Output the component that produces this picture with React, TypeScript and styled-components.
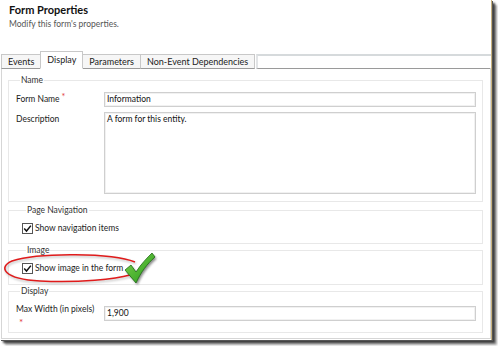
import React from "react";
import styled, { createGlobalStyle } from "styled-components";

const GlobalStyle = createGlobalStyle`
  html, body {
    margin: 0;
    padding: 0;
    background: #ffffff;
  }
  body {
    font-family: Lato, "Noto Sans", "Liberation Sans", sans-serif;
    color: #222;
  }
`;

const Stage = styled.div`
  position: relative;
  width: 498px;
  height: 346px;
  overflow: hidden;
`;

const Frame = styled.div`
  width: 492px;
  height: 340px;
  background: #fff;
  border-right: 1px solid #c9b27c;
  box-sizing: border-box;
  box-shadow: 1px 1px 0 #555, 3px 3px 2px rgba(40, 40, 40, 0.85), 5px 5px 2px rgba(90, 90, 90, 0.5);
  display: flex;
  flex-direction: column;
`;

const Header = styled.div`
  flex-shrink: 0;
  padding: 3px 9px 0;
  height: 48px;
  box-sizing: border-box;
`;

const Title = styled.div`
  font-weight: 700;
  font-size: 11px;
  line-height: 13px;
  color: #111;
`;

const Subtitle = styled.div`
  font-size: 8.5px;
  line-height: 12px;
  margin-top: 2px;
  color: #555;
`;

const TabStrip = styled.div`
  flex-shrink: 0;
  display: flex;
  align-items: flex-end;
  height: 21px;
  padding-left: 2px;
  box-sizing: border-box;
`;

const Tab = styled.div<{ $active?: boolean }>`
  height: ${(p) => (p.$active ? "18px" : "15px")};
  padding: 0 6px;
  font-size: 9px;
  line-height: 14px;
  display: flex;
  align-items: center;
  justify-content: center;
  box-sizing: border-box;
  border: 1px solid #c8c8c8;
  border-bottom: ${(p) => (p.$active ? "1px solid #fff" : "1px solid #9a9a9a")};
  margin-left: -1px;
  background: ${(p) => (p.$active ? "#fff" : "#f6f6f6")};
  color: #222;
  position: relative;
  z-index: ${(p) => (p.$active ? 1 : 0)};
`;

const TabFiller = styled.div`
  flex: 1;
  height: 15px;
  box-sizing: border-box;
  border-top: 2px solid #d6dadc;
  border-left: 2px solid #e2e4e6;
  border-bottom: 1px solid #9a9a9a;
  margin-left: 1px;
`;

const Panel = styled.div`
  flex: 1;
  min-height: 0;
  margin: -1px 0 1px 1px;
  border: 1px solid #d6d6d6;
  border-top: none;
  padding: 7px 7px 4px 6px;
  display: flex;
  flex-direction: column;
`;

const Group = styled.fieldset<{ $pad: string; $gap?: number }>`
  flex-shrink: 0;
  margin: ${(p) => p.$gap || 0}px 0 0;
  padding: ${(p) => p.$pad};
  border: 1px solid #e8e8e8;
  min-width: 0;
`;

const Legend = styled.legend`
  font-size: 8.5px;
  line-height: 11px;
  padding: 0 1px;
  margin-left: 4px;
  color: #333;
`;

const FieldGrid = styled.div`
  display: grid;
  grid-template-columns: 88px 1fr;
  row-gap: 5px;
  align-items: start;
`;

const Label = styled.div<{ $lift?: number }>`
  font-size: 8.5px;
  line-height: 13px;
  padding-top: 1px;
  margin-top: ${(p) => -(p.$lift || 0)}px;
  color: #222;
`;

const Req = styled.span`
  color: #e23a3a;
  margin-left: 2px;
  font-size: 9px;
  vertical-align: top;
  line-height: 8px;
`;

const ReqBelow = styled.div`
  color: #e23a3a;
  font-size: 10px;
  line-height: 8px;
  padding-left: 3px;
  margin-top: 2px;
`;

const Input = styled.div<{ $h?: number }>`
  height: ${(p) => p.$h || 15}px;
  box-sizing: border-box;
  border: 1px solid #cfcfcf;
  box-shadow: inset 0 0 0 1px #f1f1f1;
  font-size: 8.5px;
  line-height: 13px;
  padding: 0 2px;
  color: #111;
  background: #fff;
`;

const CheckRow = styled.label`
  display: flex;
  align-items: center;
  gap: 2px;
  font-size: 8.5px;
  line-height: 12px;
  color: #222;
`;

const Box = styled.span`
  width: 9px;
  height: 9px;
  border: 1px solid #555;
  background: #fff;
  display: inline-flex;
  align-items: center;
  justify-content: center;
  box-sizing: content-box;
`;

const Overlay = styled.svg`
  position: absolute;
  left: 0;
  top: 0;
  pointer-events: none;
`;

const Checkbox: React.FC = () => (
  <Box>
    <svg width="9" height="9" viewBox="0 0 9 9">
      <path d="M1.2 4.6 L3.5 7 L7.9 1.6" fill="none" stroke="#111" strokeWidth="1.5" />
    </svg>
  </Box>
);

const tabs = ["Events", "Display", "Parameters", "Non-Event Dependencies"];

const ring = "M135 262 C112 253 40 252 12 261 C-2 267 3 279 40 281 C80 283 116 279 130 275";
const tick = "M125 270 L131 265 L136 272 C141 264 147 258 152 253 L155 257 C147 264 141 272 136 283 Z";

export default function App() {
  return (
    <Stage>
      <GlobalStyle />
      <Frame>
        <Header>
          <Title>Form Properties</Title>
          <Subtitle>Modify this form's properties.</Subtitle>
        </Header>
        <TabStrip>
          {tabs.map((t) => (
            <Tab key={t} $active={t === "Display"}>
              {t}
            </Tab>
          ))}
          <TabFiller />
        </TabStrip>
        <Panel>
          <Group $pad="6px 6px 7px 7px">
            <Legend>Name</Legend>
            <FieldGrid>
              <Label>
                Form Name<Req>*</Req>
              </Label>
              <Input>Information</Input>
              <Label>Description</Label>
              <Input $h={82}>A form for this entity.</Input>
            </FieldGrid>
          </Group>
          <Group $pad="6px 6px 9px 13px" $gap={3}>
            <Legend>Page Navigation</Legend>
            <CheckRow>
              <Checkbox />
              Show navigation items
            </CheckRow>
          </Group>
          <Group $pad="6px 6px 10px 13px" $gap={1}>
            <Legend>Image</Legend>
            <CheckRow>
              <Checkbox />
              Show image in the form
            </CheckRow>
          </Group>
          <Group $pad="9px 6px 6px 7px" $gap={1}>
            <Legend>Display</Legend>
            <FieldGrid>
              <div>
                <Label $lift={4}>Max Width (in pixels)</Label>
                <ReqBelow>*</ReqBelow>
              </div>
              <Input>1,900</Input>
            </FieldGrid>
          </Group>
        </Panel>
      </Frame>
      <Overlay width="498" height="346" viewBox="0 0 498 346">
        <defs>
          <linearGradient id="tick" x1="0" y1="0" x2="1" y2="1">
            <stop offset="0" stopColor="#7fd14a" />
            <stop offset="1" stopColor="#239a1c" />
          </linearGradient>
          <filter id="soft" x="-20%" y="-20%" width="140%" height="140%">
            <feGaussianBlur stdDeviation="1" />
          </filter>
        </defs>
        <path d={ring} fill="none" stroke="#999" strokeWidth="2" opacity="0.5" filter="url(#soft)" transform="translate(1 1.5)" />
        <path d={ring} fill="none" stroke="#e01b1b" strokeWidth="1.6" />
        <path d={tick} fill="#333" opacity="0.55" filter="url(#soft)" transform="translate(1.5 2)" />
        <path d={tick} fill="url(#tick)" stroke="#1e6a14" strokeWidth="0.8" strokeLinejoin="round" />
      </Overlay>
    </Stage>
  );
}
